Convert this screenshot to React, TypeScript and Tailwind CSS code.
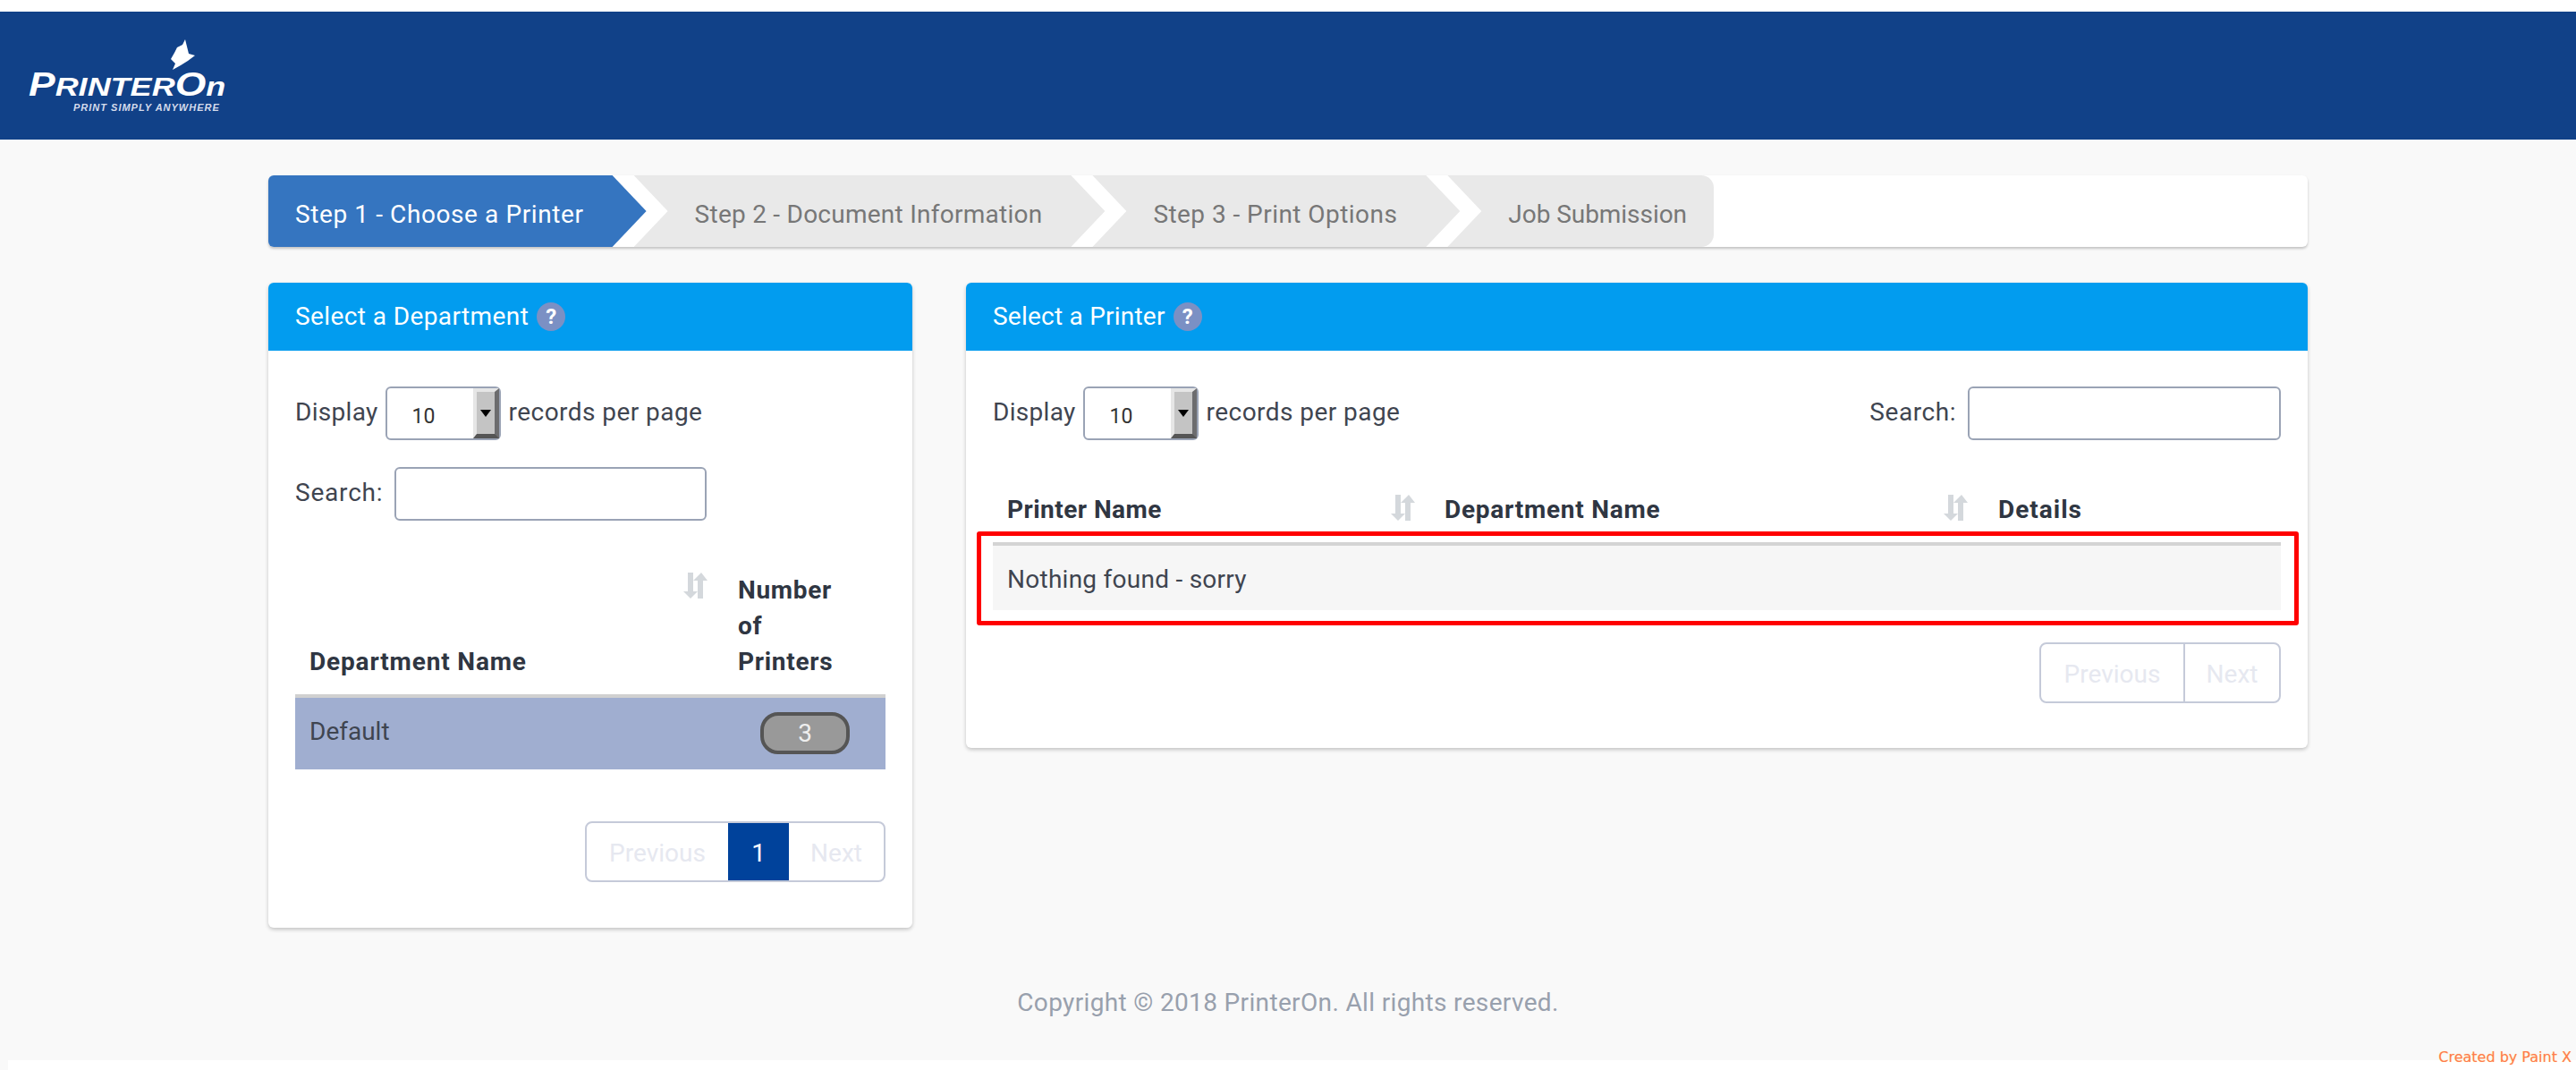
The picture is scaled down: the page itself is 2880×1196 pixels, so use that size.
import React from 'react'

const font = { fontFamily: 'Roboto, "Liberation Sans", sans-serif' }

function SortIcon() {
  return (
    <svg width="28" height="30" viewBox="0 0 28 30" className="shrink-0" fill="#d4d8dc">
      <path d="M6 0h6v21h5l-8 8-8-8h5z" />
      <path d="M17 29V9h-5l9-9 7 9h-5v20z" />
    </svg>
  )
}

function Help() {
  return (
    <span className="ml-[9px] inline-flex h-[32px] w-[32px] items-center justify-center rounded-full bg-[#7b90c4] text-[24px] font-bold text-white">
      ?
    </span>
  )
}

function PageSelect() {
  return (
    <div className="mr-[9px] ml-[8px] flex h-[60px] w-[129px] items-stretch justify-between rounded-[6px] border-2 border-[#9aa3b5] bg-white">
      <span className="mt-[13px] ml-[28px] text-[23px] leading-[38px] text-[#333]">10</span>
      <span className="flex w-[29px] items-center justify-center border-t-[4px] border-r-[5px] border-b-[5px] border-l-[4px] border-t-[#e6e6e6] border-r-[#6c6c6e] border-b-[#555] border-l-[#e6e6e6] bg-[#c4c4c4]">
        <svg width="12" height="8" viewBox="0 0 12 8">
          <path d="M0 0h12L6 8z" fill="#000" />
        </svg>
      </span>
    </div>
  )
}

function SearchBox({ className }: { className: string }) {
  return <div className={`h-[60px] rounded-[6px] border-2 border-[#9aa3b5] bg-white ${className}`} />
}

function Panel({ title, tracking, className, children }: { title: string; tracking: string; className: string; children: React.ReactNode }) {
  return (
    <section className={`rounded-[6px] bg-white shadow-[0_2px_4px_rgba(0,0,0,0.22)] ${className}`}>
      <h2 className="flex h-[76px] items-center rounded-t-[6px] bg-[#029cef] pl-[30px] text-[28px] font-normal text-white">
        <span className={tracking}>{title}</span>
        <Help />
      </h2>
      {children}
    </section>
  )
}

function Pager({ children }: { children: React.ReactNode }) {
  return (
    <div className="flex h-[68px] items-stretch overflow-hidden rounded-[8px] border-2 border-[#c5cad9] text-[28px] text-[#e6e8f0]">
      {children}
    </div>
  )
}

export default function App() {
  return (
    <div className="relative flex h-[1196px] w-[2880px] flex-col overflow-hidden bg-[#f9f9f9] text-[28px] leading-[40px] text-[#3f4550]" style={font}>
      <div className="h-[13px] bg-white" />
      <header className="flex h-[143px] items-start bg-[#114188] pt-[31px] pl-[32px] text-white">
        <div className="relative w-[225px]" style={{ fontFamily: '"Liberation Sans", sans-serif' }}>
          <svg width="30" height="36" viewBox="0 0 30 36" className="ml-[158px]" fill="#fff">
            <path d="M17 0l4 16 7 2-8 6-8 5-9 5 3-7-5-5 4-7 3-6 6-3z" />
          </svg>
          <div className="-mt-[1px] origin-left scale-x-[1.2] text-[37px] leading-[31px] font-bold whitespace-nowrap italic">
            P<span className="text-[30px]">RINTER</span>O<span className="text-[30px]">n</span>
          </div>
          <div className="mt-[2px] ml-[50px] text-[11px] leading-[12px] font-bold tracking-[1px] whitespace-nowrap text-[#d5dcec] italic">
            PRINT SIMPLY ANYWHERE
          </div>
        </div>
      </header>

      <main className="mx-[300px] flex flex-1 flex-col pt-[40px]">
        <nav className="flex h-[80px] rounded-[6px] bg-white shadow-[0_2px_3px_rgba(0,0,0,0.22)]">
          <div className="flex items-center rounded-l-[6px] bg-[#3575c0] pt-[7px] pr-[70px] pl-[30px] tracking-[0.6px] text-white [clip-path:polygon(0_0,calc(100%-38px)_0,100%_50%,calc(100%-38px)_100%,0_100%)]">
            Step 1 - Choose a Printer
          </div>
          <div className="-ml-[14px] flex items-center bg-[#e9e9e9] pt-[7px] pr-[70px] pl-[68px] tracking-[0.25px] text-[#777] [clip-path:polygon(0_0,calc(100%-38px)_0,100%_50%,calc(100%-38px)_100%,0_100%,38px_50%)]">
            Step 2 - Document Information
          </div>
          <div className="-ml-[14px] flex items-center bg-[#e9e9e9] pt-[7px] pr-[70px] pl-[68px] tracking-[0.45px] text-[#777] [clip-path:polygon(0_0,calc(100%-38px)_0,100%_50%,calc(100%-38px)_100%,0_100%,38px_50%)]">
            Step 3 - Print Options
          </div>
          <div className="-ml-[14px] flex items-center rounded-r-[14px] bg-[#e9e9e9] pt-[7px] pr-[30px] pl-[68px] tracking-[-0.05px] text-[#777] [clip-path:polygon(0_0,100%_0,100%_100%,0_100%,38px_50%)]">
            Job Submission
          </div>
        </nav>

        <div className="mt-[40px] flex items-start gap-[60px]">
          <Panel title="Select a Department" tracking="tracking-[0.4px]" className="h-[721px] w-[720px]">
            <div className="px-[30px] pt-[40px]">
              <div className="flex h-[60px] items-center">
                <span className="pb-[3px] tracking-[0.3px]">Display</span>
                <PageSelect />
                <span className="pb-[3px] tracking-[0.45px]">records per page</span>
              </div>
              <div className="mt-[30px] flex h-[60px] items-center">
                <span className="pb-[3px] tracking-[0.8px]">Search:</span>
                <SearchBox className="ml-[13px] w-[349px]" />
              </div>

              <div className="mt-[58px] flex h-[140px] items-end border-b-[4px] border-[#d0d0d0] pb-[16px] font-bold text-[#2f3642]">
                <div className="w-[433px] pl-[16px] tracking-[0.85px]">Department Name</div>
                <div className="mb-[90px] w-[62px] shrink-0">
                  <SortIcon />
                </div>
                <div className="tracking-[0.7px]">
                  Number
                  <br />
                  of
                  <br />
                  Printers
                </div>
              </div>
              <div className="flex h-[80px] bg-[#a0aed0] pt-[16px] pr-[40px] pl-[16px]">
                <span className="mt-[2px] flex-1">Default</span>
                <span className="flex h-[47px] w-[100px] items-center justify-center rounded-[20px] border-[4px] border-[#555] bg-[#999] text-[#eee]">
                  3
                </span>
              </div>

              <div className="mt-[58px] flex justify-end">
                <Pager>
                  <span className="flex w-[158px] items-center justify-center pt-[4px]">Previous</span>
                  <span className="-my-[2px] flex w-[68px] items-center justify-center bg-[#00429b] pt-[4px] text-white">1</span>
                  <span className="flex w-[106px] items-center justify-center pt-[4px]">Next</span>
                </Pager>
              </div>
            </div>
          </Panel>

          <Panel title="Select a Printer" tracking="tracking-[0.23px]" className="h-[520px] w-[1500px]">
            <div className="px-[30px] pt-[40px]">
              <div className="flex h-[60px] items-center">
                <span className="pb-[3px] tracking-[0.3px]">Display</span>
                <PageSelect />
                <span className="pb-[3px] tracking-[0.45px]">records per page</span>
                <span className="ml-auto pb-[3px] tracking-[0.55px]">Search:</span>
                <SearchBox className="ml-[13px] w-[350px]" />
              </div>

              <div className="mt-[58px] flex h-[60px] items-start border-b-[4px] border-[#d4d4d4] font-bold text-[#2f3642]">
                <div className="w-[444px] shrink-0 pl-[16px] tracking-[0.46px]">Printer Name</div>
                <div className="mt-[3px] w-[61px] shrink-0">
                  <SortIcon />
                </div>
                <div className="w-[557px] shrink-0 tracking-[0.75px]">Department Name</div>
                <div className="mt-[3px] w-[62px] shrink-0">
                  <SortIcon />
                </div>
                <div className="tracking-[1px]">Details</div>
              </div>
              <div className="h-[72px] bg-[#f6f6f6] pt-[18px] pl-[16px] tracking-[0.26px]">Nothing found - sorry</div>

              <div className="mt-[36px] flex justify-end">
                <Pager>
                  <span className="flex w-[159px] items-center justify-center pt-[4px]">Previous</span>
                  <span className="flex w-[107px] items-center justify-center border-l-2 border-[#c5cad9] pt-[4px]">Next</span>
                </Pager>
              </div>
            </div>
          </Panel>
        </div>

        <footer className="mt-[64px] text-center tracking-[0.35px] text-[#98a0ad]">Copyright © 2018 PrinterOn. All rights reserved.</footer>
      </main>

      <div className="ml-[9px] h-[11px] bg-white" />

      {/* red annotation box drawn over the screenshot */}
      <div className="absolute top-[594px] left-[1092px] h-[105px] w-[1478px] rounded-[3px] border-[5px] border-[#ff0000]" />
      <div
        className="absolute top-[1171px] right-[5px] text-[16px] leading-[22px] text-[#ff7a50] [text-shadow:0_0_1px_#ffe98a]"
        style={{ fontFamily: '"DejaVu Sans", sans-serif' }}
      >
        Created by Paint X
      </div>
    </div>
  )
}
